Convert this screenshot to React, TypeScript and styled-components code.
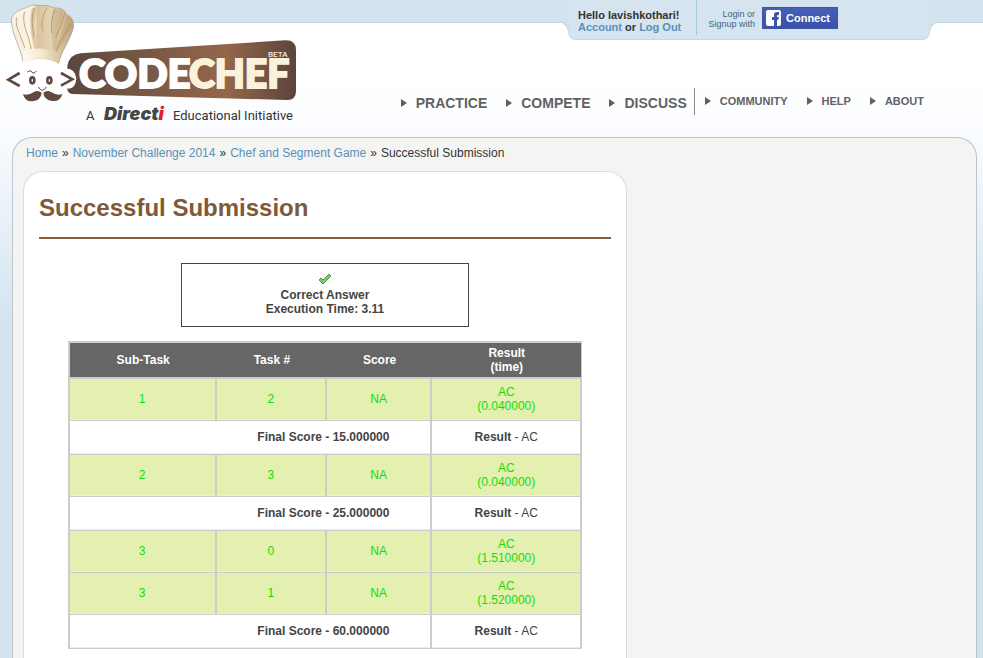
import React from "react";
import styled, { createGlobalStyle } from "styled-components";

const GlobalStyle = createGlobalStyle`
  *, *::before, *::after { box-sizing: border-box; }
  html { background: #d3e4ef; overflow: hidden; }
  body {
    margin: 0;
    font: 12px/14px "Liberation Sans", Arial, sans-serif;
    color: #444;
  }
  a { color: #5a90b6; text-decoration: none; }
`;

const Page = styled.div`
  min-height: 100vh;
  display: flex;
  flex-direction: column;
  background:
    linear-gradient(#d3e4ef 22px, #c3d8e5 22px, #c3d8e5 23px, transparent 23px),
    linear-gradient(#ffffff 80px, #fafcff 130px, #d3e4ef 325px);
`;

const Header = styled.header`
  display: flex;
  justify-content: space-between;
  align-items: flex-start;
  height: 137px;
`;

const HeaderSide = styled.div`
  display: flex;
  flex-direction: column;
  align-items: flex-end;
  gap: 48px;
`;

const UserTab = styled.div`
  position: relative;
  display: flex;
  width: 362px;
  height: 40px;
  margin-right: 53px;
  background: #d5e4ee;
  border: 1px solid #c3d8e5;
  border-top: 0;
  border-radius: 0 0 8px 8px;

  &::before,
  &::after {
    content: "";
    position: absolute;
    top: 0;
    width: 9px;
    height: 30px;
  }
  &::before {
    left: -9px;
    background: radial-gradient(circle at 0 100%, #fff 7px, #c3d8e5 7px, #c3d8e5 8px, #d4e4ee 8px);
  }
  &::after {
    right: -9px;
    background: radial-gradient(circle at 100% 100%, #fff 7px, #c3d8e5 7px, #c3d8e5 8px, #d4e4ee 8px);
  }
`;

const Greeting = styled.div`
  width: 128px;
  height: 35px;
  padding: 9px 0 0 9px;
  border-right: 1px solid #a5c8de;
  font-size: 11px;
  line-height: 12px;
  font-weight: bold;
  color: #333;
  white-space: nowrap;
`;

const LoginHint = styled.div`
  width: 58px;
  padding-top: 9px;
  font-size: 9px;
  line-height: 10px;
  text-align: right;
  color: #35688c;
`;

const FacebookButton = styled.button`
  display: flex;
  align-items: center;
  gap: 5px;
  width: 76px;
  height: 22px;
  margin: 7px 0 0 7px;
  padding: 0 0 0 3px;
  border: 1px solid #3c54a6;
  background: linear-gradient(#4560b8, #3a52a8);
  color: #fff;
  font: bold 11px/14px "Liberation Sans", Arial, sans-serif;
`;

const Nav = styled.nav`
  display: flex;
  align-items: stretch;
  height: 27px;
  margin-right: 59px;
`;

const NavGroup = styled.div<{ $minor?: boolean }>`
  display: flex;
  gap: 19px;
  padding-top: ${(p) => (p.$minor ? "6px" : "8px")};
  padding-left: ${(p) => (p.$minor ? "10px" : "0")};
  padding-right: ${(p) => (p.$minor ? "0" : "7px")};
  border-left: ${(p) => (p.$minor ? "1px solid #8c8c8c" : "0")};
  font-size: ${(p) => (p.$minor ? "11px" : "14px")};
`;

const NavLink = styled.a`
  display: flex;
  align-items: center;
  gap: 9px;
  height: 14px;
  font-weight: bold;
  line-height: 14px;
  color: #626262;

  &::before {
    content: "";
    border-left: 6px solid #606060;
    border-top: 4px solid transparent;
    border-bottom: 4px solid transparent;
  }
`;

const Main = styled.main`
  flex: 1;
  margin: 0 6px 0 12px;
  padding: 8px 9px 0 10px;
  border: 1px solid #bcc5ca;
  border-width: 1px 1px 0;
  border-radius: 20px 20px 0 0;
  background: #f4f4f2;
`;

const Breadcrumb = styled.nav`
  display: flex;
  gap: 4px;
  padding-left: 3px;
  color: #333;
`;

const Columns = styled.div`
  display: grid;
  grid-template-columns: 604fr 340fr;
  margin-top: 11px;
`;

const Panel = styled.section`
  min-height: 487px;
  padding: 21px 15px 9px;
  border: 1px solid #dcdcdc;
  border-width: 1px 1px 0;
  border-radius: 20px 20px 0 0;
  background: #fff;
`;

const Title = styled.h1`
  margin: 0 0 24px;
  padding-bottom: 15px;
  border-bottom: 2px solid #865c3d;
  font-size: 24px;
  line-height: 29px;
  color: #805939;
`;

const Verdict = styled.div`
  width: 288px;
  height: 64px;
  margin: 0 auto 14px;
  padding-top: 9px;
  border: 1px solid #444;
  text-align: center;
  font-weight: bold;

  svg { display: block; margin: 0 auto 3px; }
`;

const Results = styled.table`
  width: 90%;
  margin: 0 auto;
  border: solid #ccc;
  border-width: 2px 0 0 2px;
  border-collapse: separate;
  border-spacing: 0;
  table-layout: fixed;
  text-align: center;
`;

const HeadCell = styled.th<{ $share: number }>`
  width: ${(p) => p.$share}%;
  height: 36px;
  padding: 3px 0;
  background: #666;
  border-bottom: 2px solid #ccc;
  color: #fff;
  &:last-child { border-right: 1px solid #ccc; }
`;

const Cell = styled.td<{ $pass?: boolean }>`
  height: ${(p) => (p.$pass ? "42px" : "34px")};
  padding: 0 0 2px;
  border-right: 2px solid #ccc;
  border-bottom: 1px solid #ccc;
  background: ${(p) => (p.$pass ? "#e4f0af" : "#fff")};
  box-shadow: inset 0 -1px #ececec;
  color: ${(p) => (p.$pass ? "#0be00b" : "#444")};
`;

const ScoreCell = styled(Cell)`
  padding-left: 147px;
`;

const columns = [
  { label: "Sub-Task", share: 28.7 },
  { label: "Task #", share: 21.5 },
  { label: "Score", share: 20.5 },
  { label: "Result (time)", share: 29.3 },
];

const groups = [
  { tasks: [["1", "2", "0.040000"]], score: "15.000000" },
  { tasks: [["2", "3", "0.040000"]], score: "25.000000" },
  { tasks: [["3", "0", "1.510000"], ["3", "1", "1.520000"]], score: "60.000000" },
];

function Logo() {
  return (
    <svg width="300" height="130" viewBox="0 0 300 130" role="img" aria-label="CodeChef">
      <defs>
        <linearGradient id="plate">
          <stop offset="0" stopColor="#5b453e" />
          <stop offset=".25" stopColor="#715443" />
          <stop offset=".7" stopColor="#94664b" />
          <stop offset="1" stopColor="#5b443c" />
        </linearGradient>
        <linearGradient id="hat">
          <stop offset="0" stopColor="#f4ecd8" />
          <stop offset=".35" stopColor="#fbf5e6" />
          <stop offset=".42" stopColor="#d9c39c" />
          <stop offset=".65" stopColor="#e5d5b6" />
          <stop offset="1" stopColor="#bfa47a" />
        </linearGradient>
        <linearGradient id="band">
          <stop offset="0" stopColor="#fffaf0" />
          <stop offset=".5" stopColor="#f5ead3" />
          <stop offset="1" stopColor="#d7c4a0" />
        </linearGradient>
      </defs>
      <g transform="scale(.33333)">
        <path d="M202 198Q208 163 242 160L856 121Q888 120 888 150V274Q888 302 858 300L218 282Q203 281 202 266Z" fill="url(#plate)" />
        <path d="M72 188Q125 165 174 188L197 205Q228 207 229 237Q226 266 206 266L180 258L60 270L50 205Z" fill="#fff" />
        <path d="M69 185C61 140 34 100 34 60C36 40 55 30 74 25Q96 11 121 17Q143 13 164 24Q192 22 200 43Q222 53 221 80C212 120 183 153 176 190Q125 165 69 185Z" fill="url(#hat)" stroke="#9d9c9b" strokeWidth="2" />
        <path d="M35 61Q37 41 73 26Q68 48 70 78Q78 125 100 151L73 165Z" fill="#f8f2e5" opacity=".75" />
        <path d="M96 23Q83 70 103 146L111 147Q96 80 111 23Z" fill="#ddc9a4" />
        <path d="M160 27Q150 66 158 148L170 158Q195 115 219 80Q219 58 200 47Q193 87 169 133Q181 68 190 31Z" fill="#b99c72" opacity=".35" />
        <g fill="none" stroke="#b78953" strokeWidth="3" strokeLinecap="round" opacity=".7">
          <path d="M50 54Q44 71 60 105L74 143" />
          <path d="M73 36Q65 63 85 112L94 146" />
          <path d="M103 24Q90 60 103 110" />
          <path d="M140 24Q119 60 128 92" />
          <path d="M165 29Q150 57 155 100" />
          <path d="M194 41Q186 72 168 111" />
          <path d="M212 73Q188 110 169 150" />
        </g>
        <path d="M70 155Q122 132 172 163L177 193Q125 160 69 190Z" fill="url(#band)" />
        <path d="M66 191Q124 161 178 193L173 206H72Z" fill="#fff" />
        <g fill="none" stroke="#624940" strokeWidth="8">
          <path d="M59 219L25 239L59 258" />
          <path d="M183 219L217 238L183 257" />
          <path d="M82 216Q91 208 96 216T109 213" strokeWidth="3" />
          <path d="M115 261Q127 281 139 261" strokeWidth="3" />
          <ellipse cx="97" cy="241" rx="6" ry="9" />
          <ellipse cx="148" cy="241" rx="6" ry="9" />
        </g>
        <path d="M125 278Q113 269 102 276Q81 289 69 282Q74 305 98 304Q123 300 125 278Z" fill="#624940" />
        <path d="M130 278Q142 269 153 276Q174 289 187 281Q182 305 157 303Q132 300 130 278Z" fill="#624940" />
      </g>
      <g fontFamily="Lato, sans-serif" fontWeight="900" strokeWidth="2">
        <text x="79" y="88" fontSize="40" fill="#fff" stroke="#fff">CODE</text>
        <text x="189" y="88" fontSize="39" fill="#faf2dc" stroke="#faf2dc">CHEF</text>
      </g>
      <text x="268" y="57" fontFamily="Roboto, sans-serif" fontSize="8" fontWeight="500" fill="#f5ecdc">BETA</text>
      <g fontFamily="Roboto, sans-serif" fontSize="13" fill="#333">
        <text x="86" y="120">A</text>
        <text x="173" y="120">Educational Initiative</text>
      </g>
      <text x="104" y="120" fontFamily="Inter, sans-serif" fontSize="18" fontWeight="900" fontStyle="italic" fill="#454545">
        Direct<tspan fill="#e0222e">i</tspan>
      </text>
    </svg>
  );
}

export default function App() {
  return (
    <>
      <GlobalStyle />
      <Page>
        <Header>
          <Logo />
          <HeaderSide>
            <UserTab>
              <Greeting>
                Hello lavishkothari!
                <br />
                <a href="#account">Account</a> or <a href="#logout">Log Out</a>
              </Greeting>
              <LoginHint>Login or Signup with</LoginHint>
              <FacebookButton type="button">
                <svg width="15" height="16" viewBox="0 0 15 16" aria-hidden="true">
                  <rect width="15" height="16" rx="2" fill="#fff" />
                  <path d="M8 16V10H6V7H8V5Q8 2 11 2H13V5H12Q11 5 11 6V7H13L12 10H11V16Z" fill="#3e57ad" />
                </svg>
                Connect
              </FacebookButton>
            </UserTab>
            <Nav>
              <NavGroup>
                <NavLink href="#practice">PRACTICE</NavLink>
                <NavLink href="#compete">COMPETE</NavLink>
                <NavLink href="#discuss">DISCUSS</NavLink>
              </NavGroup>
              <NavGroup $minor>
                <NavLink href="#community">COMMUNITY</NavLink>
                <NavLink href="#help">HELP</NavLink>
                <NavLink href="#about">ABOUT</NavLink>
              </NavGroup>
            </Nav>
          </HeaderSide>
        </Header>
        <Main>
          <Breadcrumb>
            <a href="#home">Home</a>
            <span>»</span>
            <a href="#contest">November Challenge 2014</a>
            <span>»</span>
            <a href="#problem">Chef and Segment Game</a>
            <span>»</span>
            <span>Successful Submission</span>
          </Breadcrumb>
          <Columns>
            <Panel>
              <Title>Successful Submission</Title>
              <Verdict>
                <svg width="14" height="12" viewBox="0 0 14 12" aria-hidden="true">
                  <path d="M1 7L3 5L5 7L11 1L13 3L5 11Z" fill="#7cca74" stroke="#4f9d4b" strokeLinejoin="round" />
                </svg>
                Correct Answer
                <br />
                Execution Time: 3.11
              </Verdict>
              <Results>
                <thead>
                  <tr>
                    {columns.map((c) => (
                      <HeadCell key={c.label} $share={c.share}>
                        {c.label === "Result (time)" ? <>Result<br />(time)</> : c.label}
                      </HeadCell>
                    ))}
                  </tr>
                </thead>
                <tbody>
                  {groups.map((g) => (
                    <React.Fragment key={g.score}>
                      {g.tasks.map(([sub, task, time]) => (
                        <tr key={task}>
                          <Cell $pass>{sub}</Cell>
                          <Cell $pass>{task}</Cell>
                          <Cell $pass>NA</Cell>
                          <Cell $pass>AC<br />({time})</Cell>
                        </tr>
                      ))}
                      <tr>
                        <ScoreCell colSpan={3}><b>Final Score - {g.score}</b></ScoreCell>
                        <Cell><b>Result</b> - AC</Cell>
                      </tr>
                    </React.Fragment>
                  ))}
                </tbody>
              </Results>
            </Panel>
          </Columns>
        </Main>
      </Page>
    </>
  );
}
